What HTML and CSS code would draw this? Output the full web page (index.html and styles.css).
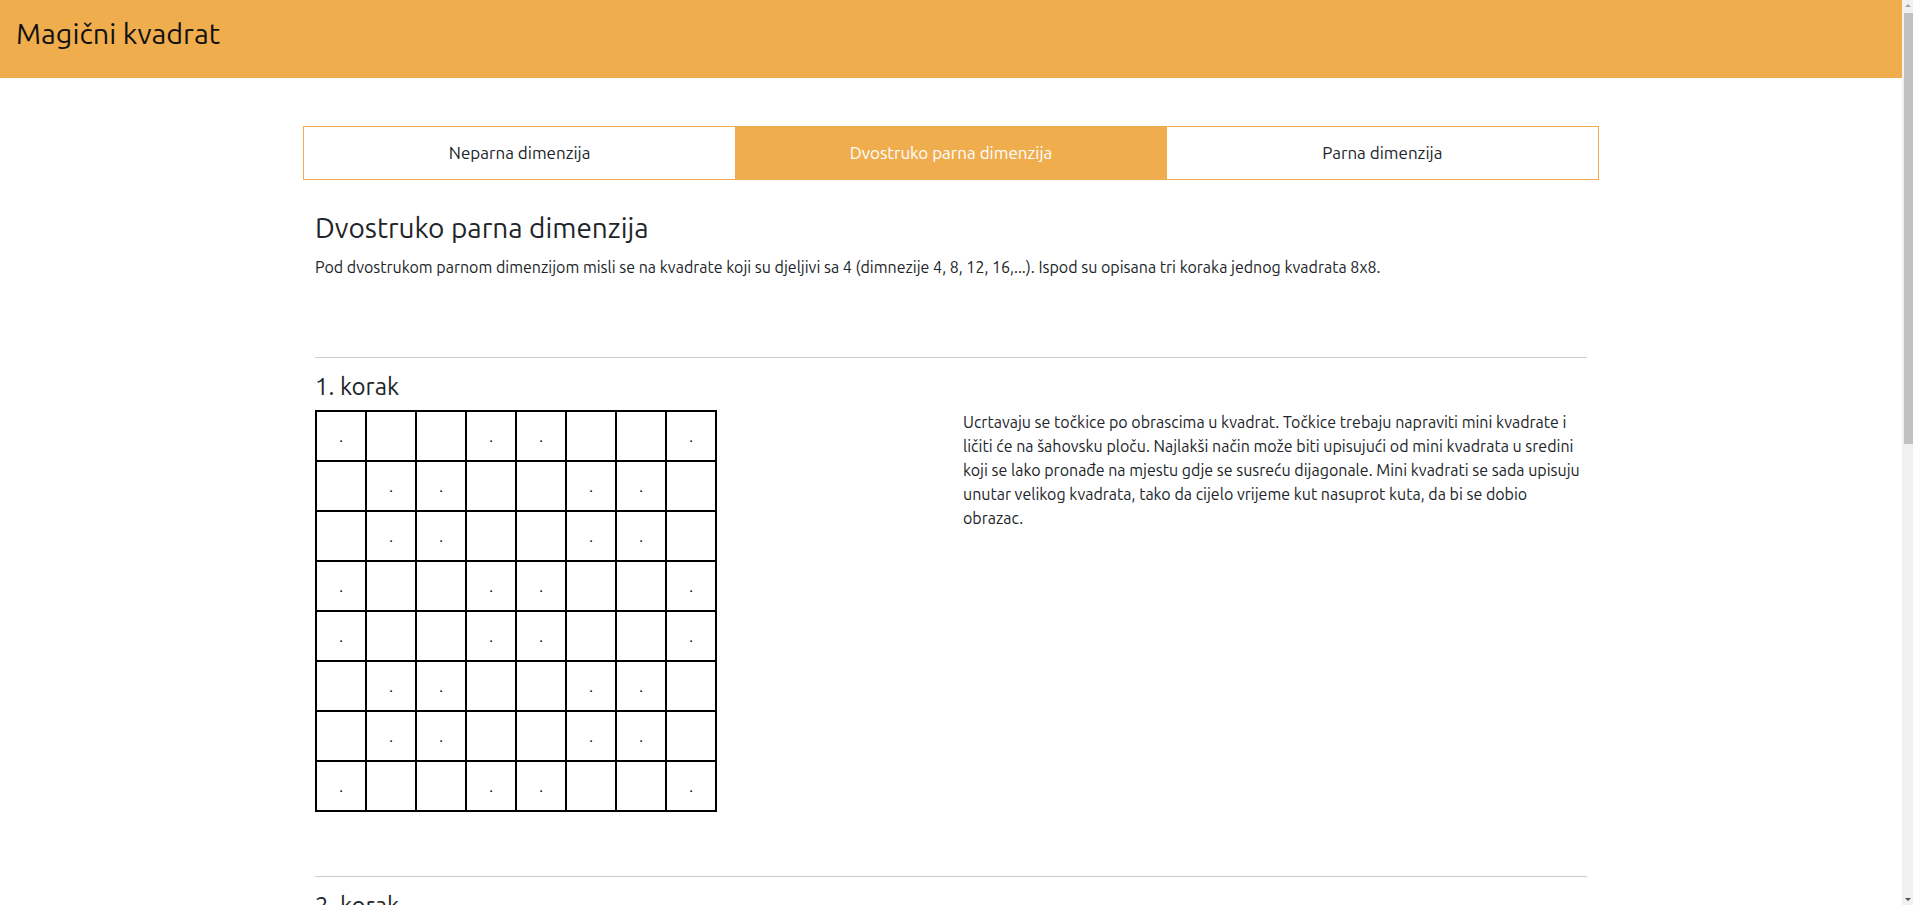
FILE: index.html
```html
<!DOCTYPE html>
<html lang="hr">
<head>
<meta charset="utf-8">
<title>Magični kvadrat</title>
<link rel="stylesheet" href="styles.css">
</head>
<body>
<header class="topbar">
  <h1 class="brand">Magični kvadrat</h1>
</header>
<main class="container">
  <nav class="tabs">
    <a class="tab" href="#">Neparna dimenzija</a>
    <a class="tab active" href="#">Dvostruko parna dimenzija</a>
    <a class="tab" href="#">Parna dimenzija</a>
  </nav>
  <section class="content">
    <h2 class="title">Dvostruko parna dimenzija</h2>
    <p class="intro">Pod dvostrukom parnom dimenzijom misli se na kvadrate koji su djeljivi sa 4 (dimnezije 4, 8, 12, 16,...). Ispod su opisana tri koraka jednog kvadrata 8x8.</p>

    <div class="step">
      <hr class="divider">
      <h3 class="step-title">1. korak</h3>
      <div class="step-row">
        <div class="step-col">
          <div class="grid dots">
            <div class="cell">.</div><div class="cell"></div><div class="cell"></div><div class="cell">.</div><div class="cell">.</div><div class="cell"></div><div class="cell"></div><div class="cell">.</div>
            <div class="cell"></div><div class="cell">.</div><div class="cell">.</div><div class="cell"></div><div class="cell"></div><div class="cell">.</div><div class="cell">.</div><div class="cell"></div>
            <div class="cell"></div><div class="cell">.</div><div class="cell">.</div><div class="cell"></div><div class="cell"></div><div class="cell">.</div><div class="cell">.</div><div class="cell"></div>
            <div class="cell">.</div><div class="cell"></div><div class="cell"></div><div class="cell">.</div><div class="cell">.</div><div class="cell"></div><div class="cell"></div><div class="cell">.</div>
            <div class="cell">.</div><div class="cell"></div><div class="cell"></div><div class="cell">.</div><div class="cell">.</div><div class="cell"></div><div class="cell"></div><div class="cell">.</div>
            <div class="cell"></div><div class="cell">.</div><div class="cell">.</div><div class="cell"></div><div class="cell"></div><div class="cell">.</div><div class="cell">.</div><div class="cell"></div>
            <div class="cell"></div><div class="cell">.</div><div class="cell">.</div><div class="cell"></div><div class="cell"></div><div class="cell">.</div><div class="cell">.</div><div class="cell"></div>
            <div class="cell">.</div><div class="cell"></div><div class="cell"></div><div class="cell">.</div><div class="cell">.</div><div class="cell"></div><div class="cell"></div><div class="cell">.</div>
          </div>
        </div>
        <div class="step-col">
          <p class="step-text">Ucrtavaju se točkice po obrascima u kvadrat. Točkice trebaju napraviti mini kvadrate i ličiti će na šahovsku ploču. Najlakši način može biti upisujući od mini kvadrata u sredini koji se lako pronađe na mjestu gdje se susreću dijagonale. Mini kvadrati se sada upisuju unutar velikog kvadrata, tako da cijelo vrijeme kut nasuprot kuta, da bi se dobio obrazac.</p>
        </div>
      </div>
    </div>

    <div class="step">
      <hr class="divider">
      <h3 class="step-title">2. korak</h3>
      <div class="step-row">
        <div class="step-col">
          <div class="grid">
            <div class="cell">1</div><div class="cell"></div><div class="cell"></div><div class="cell">4</div><div class="cell">5</div><div class="cell"></div><div class="cell"></div><div class="cell">8</div>
            <div class="cell"></div><div class="cell">10</div><div class="cell">11</div><div class="cell"></div><div class="cell"></div><div class="cell">14</div><div class="cell">15</div><div class="cell"></div>
            <div class="cell"></div><div class="cell">18</div><div class="cell">19</div><div class="cell"></div><div class="cell"></div><div class="cell">22</div><div class="cell">23</div><div class="cell"></div>
            <div class="cell">25</div><div class="cell"></div><div class="cell"></div><div class="cell">28</div><div class="cell">29</div><div class="cell"></div><div class="cell"></div><div class="cell">32</div>
            <div class="cell">33</div><div class="cell"></div><div class="cell"></div><div class="cell">36</div><div class="cell">37</div><div class="cell"></div><div class="cell"></div><div class="cell">40</div>
            <div class="cell"></div><div class="cell">42</div><div class="cell">43</div><div class="cell"></div><div class="cell"></div><div class="cell">46</div><div class="cell">47</div><div class="cell"></div>
            <div class="cell"></div><div class="cell">50</div><div class="cell">51</div><div class="cell"></div><div class="cell"></div><div class="cell">54</div><div class="cell">55</div><div class="cell"></div>
            <div class="cell">57</div><div class="cell"></div><div class="cell"></div><div class="cell">60</div><div class="cell">61</div><div class="cell"></div><div class="cell"></div><div class="cell">64</div>
          </div>
        </div>
        <div class="step-col">
          <p class="step-text">Brojevi od 1 do 64 upisuju se redom, s lijeva na desno i odozgo prema dolje, ali samo u polja koja su označena točkicama. Polja bez točkice se preskaču, ali se i za njih broji.</p>
        </div>
      </div>
    </div>

    <div class="step">
      <hr class="divider">
      <h3 class="step-title">3. korak</h3>
      <div class="step-row">
        <div class="step-col">
          <div class="grid">
            <div class="cell">1</div><div class="cell">63</div><div class="cell">62</div><div class="cell">4</div><div class="cell">5</div><div class="cell">59</div><div class="cell">58</div><div class="cell">8</div>
            <div class="cell">56</div><div class="cell">10</div><div class="cell">11</div><div class="cell">53</div><div class="cell">52</div><div class="cell">14</div><div class="cell">15</div><div class="cell">49</div>
            <div class="cell">48</div><div class="cell">18</div><div class="cell">19</div><div class="cell">45</div><div class="cell">44</div><div class="cell">22</div><div class="cell">23</div><div class="cell">41</div>
            <div class="cell">25</div><div class="cell">39</div><div class="cell">38</div><div class="cell">28</div><div class="cell">29</div><div class="cell">35</div><div class="cell">34</div><div class="cell">32</div>
            <div class="cell">33</div><div class="cell">31</div><div class="cell">30</div><div class="cell">36</div><div class="cell">37</div><div class="cell">27</div><div class="cell">26</div><div class="cell">40</div>
            <div class="cell">24</div><div class="cell">42</div><div class="cell">43</div><div class="cell">21</div><div class="cell">20</div><div class="cell">46</div><div class="cell">47</div><div class="cell">17</div>
            <div class="cell">16</div><div class="cell">50</div><div class="cell">51</div><div class="cell">13</div><div class="cell">12</div><div class="cell">54</div><div class="cell">55</div><div class="cell">9</div>
            <div class="cell">57</div><div class="cell">7</div><div class="cell">6</div><div class="cell">60</div><div class="cell">61</div><div class="cell">3</div><div class="cell">2</div><div class="cell">64</div>
          </div>
        </div>
        <div class="step-col">
          <p class="step-text">U preostala prazna polja upisuju se brojevi od 64 do 1, ovaj put od desna na lijevo i odozdo prema gore, opet preskačući polja koja su već popunjena. Zbroj svakog retka, stupca i dijagonale iznosi 260.</p>
        </div>
      </div>
    </div>
  </section>
</main>
<div class="scrollbar" aria-hidden="true">
  <span class="sb-arrow sb-up"></span>
  <span class="sb-thumb"></span>
  <span class="sb-arrow sb-down"></span>
</div>
</body>
</html>
```

FILE: styles.css
```css
html, body {
  margin: 0;
  padding: 0;
}
body {
  margin-right: 11px;
  font-family: Ubuntu, Lato, "Open Sans", sans-serif;
  font-size: 16px;
  line-height: 1.5;
  color: #212529;
  background: #fff;
}
.topbar {
  height: 78px;
  background: #f0ad4e;
  box-sizing: border-box;
  padding: 16px 16px 0;
}
.brand {
  margin: 0;
  font-size: 28.8px;
  font-weight: 400;
  line-height: 1.2;
  color: #111;
}
.container {
  width: 1296px;
  margin: 48px auto 0;
  padding-bottom: 60px;
}
.tabs {
  display: flex;
  border: 1px solid #f0ad4e;
  height: 54px;
  box-sizing: border-box;
}
.tab {
  flex: 1 1 0;
  display: flex;
  align-items: center;
  justify-content: center;
  text-decoration: none;
  color: #212529;
  font-size: 17px;
}
.tab.active {
  background: #f0ad4e;
  color: #fff;
}
.content {
  padding: 0 12px;
}
.title {
  margin: 31px 0 10px;
  font-size: 28px;
  font-weight: 400;
  line-height: 1.2;
}
.intro {
  margin: 0 0 78px;
}
.divider {
  margin: 64px 0 15px;
  border: 0;
  border-top: 1px solid #cccccc;
  height: 0;
}
.step-title {
  margin: 0 0 9px;
  font-size: 24px;
  font-weight: 400;
  line-height: 1.2;
}
.step-row {
  display: grid;
  grid-template-columns: 1fr 1fr;
  column-gap: 24px;
}
.step-text {
  margin: 0;
  padding-top: 0;
}
.grid {
  display: grid;
  grid-template-columns: repeat(8, 48px);
  grid-auto-rows: 48px;
  gap: 2px;
  padding: 2px;
  background: #000;
  width: max-content;
}
.cell {
  background: #fff;
  display: flex;
  align-items: center;
  justify-content: center;
  font-size: 16px;
}
.dots .cell {
  font-size: 15px;
  color: #000;
  padding-top: 2px;
  box-sizing: border-box;
}
.scrollbar {
  position: fixed;
  top: 0;
  right: 0;
  width: 11px;
  height: 100vh;
  background: #f1f1f1;
}
.sb-thumb {
  position: absolute;
  top: 13px;
  left: 2px;
  width: 9px;
  height: 431px;
  background: #c1c1c1;
}
.sb-arrow {
  position: absolute;
  left: 3px;
  width: 0;
  height: 0;
  border-left: 3.5px solid transparent;
  border-right: 3.5px solid transparent;
}
.sb-up {
  top: 4px;
  border-bottom: 3.5px solid #a3a3a3;
}
.sb-down {
  bottom: 4px;
  border-top: 3.5px solid #505050;
}
```
